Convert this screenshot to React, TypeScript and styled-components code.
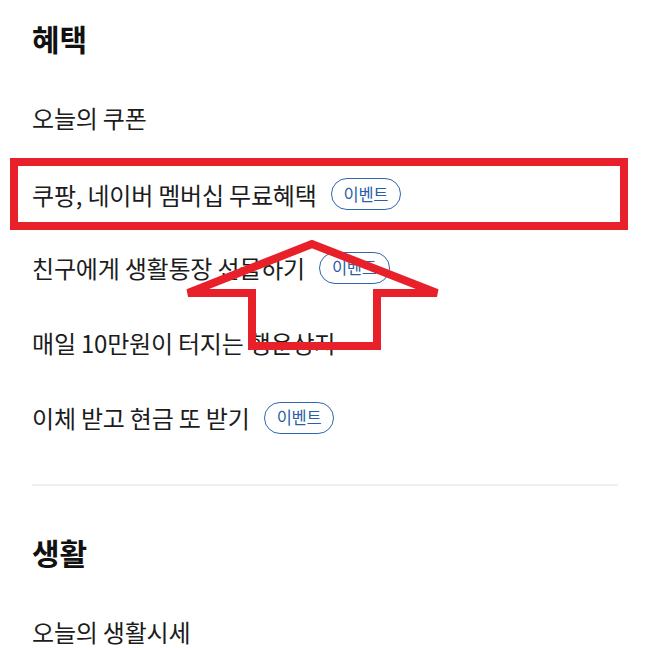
import React from "react";
import styled, { createGlobalStyle } from "styled-components";

const Global = createGlobalStyle`
  html, body { margin: 0; padding: 0; background: #ffffff; }
  body { font-family: "Noto Sans CJK KR", "Noto Sans", sans-serif; }
`;

const Page = styled.div`
  position: relative;
  width: 648px;
  height: 648px;
  overflow: hidden;
  box-sizing: border-box;
  padding: 18px 30px 0 32px;
  background: #ffffff;
`;

const Section = styled.section`
  display: flex;
  flex-direction: column;
`;

const Heading = styled.h2`
  margin: 0 0 22px;
  height: 40px;
  line-height: 40px;
  font-size: 30px;
  font-weight: 700;
  color: #111111;
`;

const Row = styled.div<{ $highlight?: boolean }>`
  display: flex;
  align-items: center;
  gap: 14px;
  height: 75px;
  box-sizing: border-box;
  ${(p) =>
    p.$highlight &&
    `
    height: 72px;
    margin: 3px -10px 0 -22px;
    padding-left: 14px;
    border: 8px solid #e8202a;
  `}
`;

const Label = styled.span`
  font-size: 24px;
  font-weight: 400;
  color: #1c1c1c;
  letter-spacing: -0.2px;
  white-space: nowrap;
`;

const Badge = styled.span`
  display: inline-flex;
  align-items: center;
  justify-content: center;
  height: 32px;
  box-sizing: border-box;
  padding: 0 12px 1px;
  border: 1.5px solid #2f66b0;
  border-radius: 16px;
  font-size: 16.5px;
  color: #2a5fa8;
  letter-spacing: -0.3px;
`;

const Divider = styled.hr`
  margin: 29px 0 46px;
  border: none;
  height: 2px;
  background: #efefef;
`;

const Arrow = styled.svg`
  position: absolute;
  left: 0;
  top: 0;
  pointer-events: none;
`;

const benefits = [
  { label: "오늘의 쿠폰" },
  { label: "쿠팡, 네이버 멤버십 무료혜택", badge: true, highlight: true },
  { label: "친구에게 생활통장 선물하기", badge: true },
  { label: "매일 10만원이 터지는 행운상자" },
  { label: "이체 받고 현금 또 받기", badge: true },
];

export default function App() {
  return (
    <>
      <Global />
      <Page>
        <Section>
          <Heading>혜택</Heading>
          {benefits.map((b) => (
            <Row key={b.label} $highlight={b.highlight}>
              <Label>{b.label}</Label>
              {b.badge && <Badge>이벤트</Badge>}
            </Row>
          ))}
        </Section>
        <Divider />
        <Section>
          <Heading>생활</Heading>
          <Row>
            <Label>오늘의 생활시세</Label>
          </Row>
        </Section>
        <Arrow width="648" height="648" viewBox="0 0 648 648">
          <polygon
            points="312,244 188,293 252,293 252,346 377,346 377,293 437,293"
            fill="none"
            stroke="#e8202a"
            strokeWidth="8"
            strokeLinejoin="miter"
          />
        </Arrow>
      </Page>
    </>
  );
}
